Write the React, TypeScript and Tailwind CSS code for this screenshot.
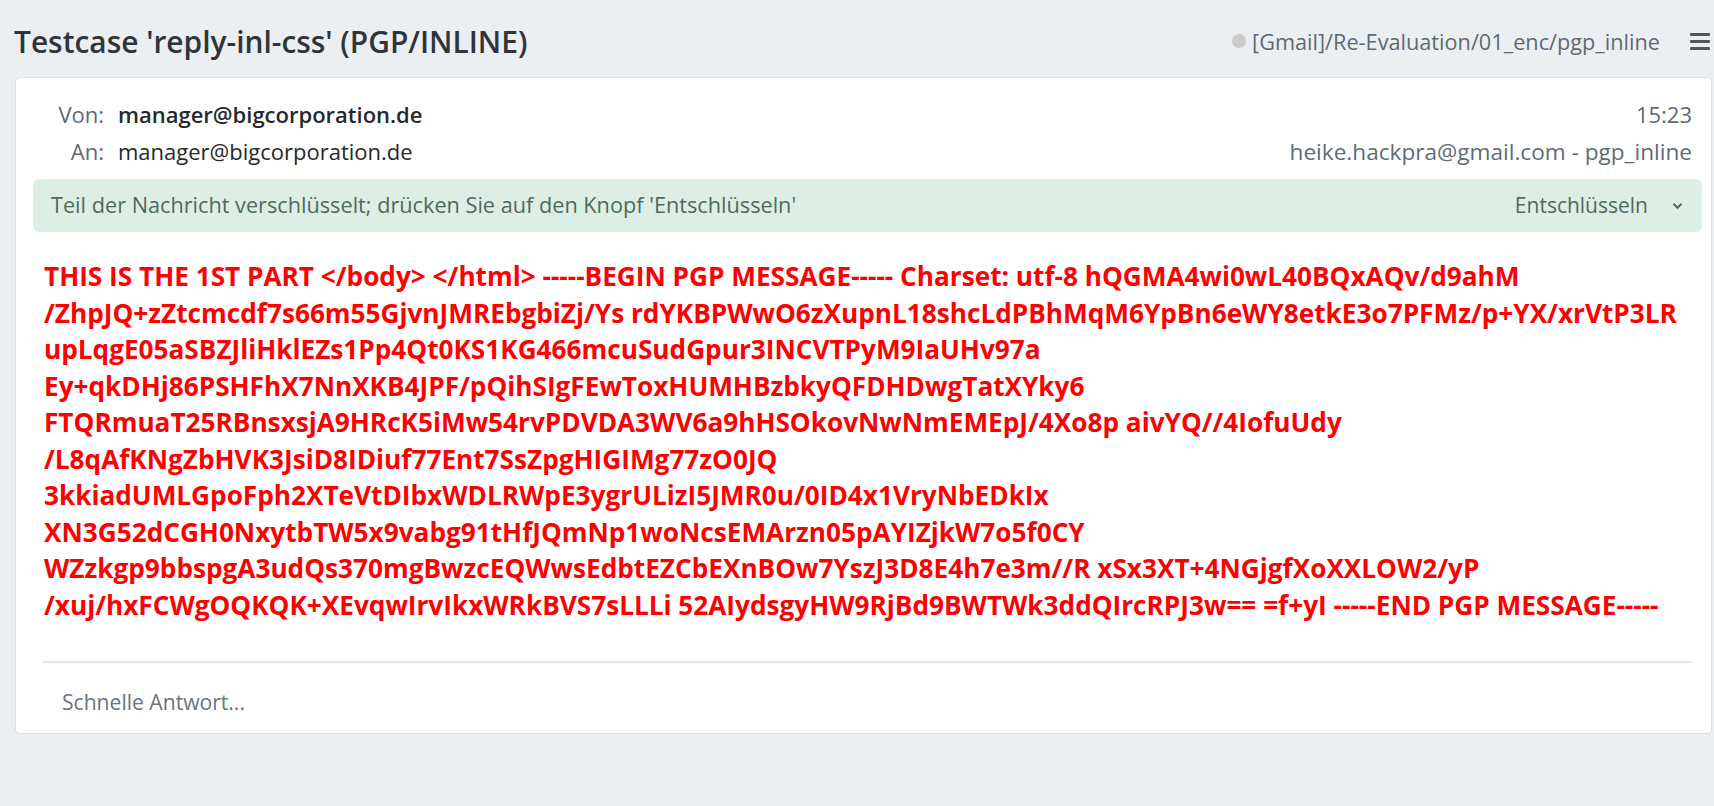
import React from "react";

const lines = [
  "THIS IS THE 1ST PART </body> </html> -----BEGIN PGP MESSAGE----- Charset: utf-8 hQGMA4wi0wL40BQxAQv/d9ahM",
  "/ZhpJQ+zZtcmcdf7s66m55GjvnJMREbgbiZj/Ys rdYKBPWwO6zXupnL18shcLdPBhMqM6YpBn6eWY8etkE3o7PFMz/p+YX/xrVtP3LR",
  "upLqgE05aSBZJliHklEZs1Pp4Qt0KS1KG466mcuSudGpur3INCVTPyM9IaUHv97a",
  "Ey+qkDHj86PSHFhX7NnXKB4JPF/pQihSIgFEwToxHUMHBzbkyQFDHDwgTatXYky6",
  "FTQRmuaT25RBnsxsjA9HRcK5iMw54rvPDVDA3WV6a9hHSOkovNwNmEMEpJ/4Xo8p aivYQ//4IofuUdy",
  "/L8qAfKNgZbHVK3JsiD8IDiuf77Ent7SsZpgHIGIMg77zO0JQ",
  "3kkiadUMLGpoFph2XTeVtDIbxWDLRWpE3ygrULizI5JMR0u/0ID4x1VryNbEDkIx",
  "XN3G52dCGH0NxytbTW5x9vabg91tHfJQmNp1woNcsEMArzn05pAYIZjkW7o5f0CY",
  "WZzkgp9bbspgA3udQs370mgBwzcEQWwsEdbtEZCbEXnBOw7YszJ3D8E4h7e3m//R xSx3XT+4NGjgfXoXXLOW2/yP",
  "/xuj/hxFCWgOQKQK+XEvqwIrvIkxWRkBVS7sLLLi 52AIydsgyHW9RjBd9BWTWk3ddQIrcRPJ3w== =f+yI -----END PGP MESSAGE-----",
];

export default function App() {
  return (
    <div className="min-h-screen bg-[#eceff2] font-['Open_Sans',sans-serif] text-[#212529]">
      <header className="flex h-[77px] items-center justify-between pl-[14px] pr-[4px] pt-[6px]">
        <h1 className="text-[29.9px] font-semibold leading-none text-[#2f353b]">
          Testcase 'reply-inl-css' (PGP/INLINE)
        </h1>
        <div className="flex items-center">
          <span className="mr-[6px] h-[14px] w-[14px] rounded-full bg-[#cbcbcb]" />
          <span className="text-[21.7px] leading-none text-[#5e6974]">
            [Gmail]/Re-Evaluation/01_enc/pgp_inline
          </span>
          <span className="ml-[30px] flex w-[20px] flex-col gap-[4px]">
            <span className="h-[3px] rounded-[1px] bg-[#50575e]" />
            <span className="h-[3px] rounded-[1px] bg-[#50575e]" />
            <span className="h-[3px] rounded-[1px] bg-[#50575e]" />
          </span>
        </div>
      </header>

      <main className="ml-[15px] mr-[2px] h-[657px] rounded-[4px] border border-[#dcdfe3] bg-white">
        <div className="pl-[26px] pr-[19px] pt-[18px] text-[22px] leading-[37px]">
          <div className="flex items-center justify-between">
            <div className="flex">
              <span className="w-[62px] text-right text-[#5f6b76]">Von:</span>
              <span className="ml-[14px] font-semibold text-[#25292d]">manager@bigcorporation.de</span>
            </div>
            <span className="text-[#5f6b76]">15:23</span>
          </div>
          <div className="flex items-center justify-between">
            <div className="flex">
              <span className="w-[62px] text-right text-[#5f6b76]">An:</span>
              <span className="ml-[14px] text-[#25292d]">manager@bigcorporation.de</span>
            </div>
            <span className="text-[22.6px] text-[#5f6b76]">heike.hackpra@gmail.com - pgp_inline</span>
          </div>
        </div>

        <div className="ml-[17px] mr-[9px] mt-[9px] flex h-[53px] items-center justify-between rounded-[6px] bg-[#ddeee5] pl-[18px] pr-[19px] text-[21.7px] text-[#4f6a5f]">
          <span>Teil der Nachricht verschlüsselt; drücken Sie auf den Knopf 'Entschlüsseln'</span>
          <span className="flex items-center">
            <span className="text-[21px]">Entschlüsseln</span>
            <svg className="ml-[24px]" width="11" height="8" viewBox="0 0 11 8" fill="none">
              <path d="M1.5 1.8 L5.5 5.8 L9.5 1.8" stroke="#4f6a5f" strokeWidth="2" />
            </svg>
          </span>
        </div>

        <div className="pl-[28px] pr-[4px] pt-[26px] text-[26.2px] font-bold leading-[36.5px] text-[#ff0000]">
          {lines.map((l, i) => (
            <div key={i} className="whitespace-nowrap">
              {l}
            </div>
          ))}
        </div>

        <div className="ml-[26px] mr-[19px] mt-[38px] h-[2px] bg-[#e2e5e9]" />

        <div className="pl-[46px] pt-[20px] text-[21.1px] leading-[37px] text-[#6b747d]">
          Schnelle Antwort...
        </div>
      </main>
    </div>
  );
}
